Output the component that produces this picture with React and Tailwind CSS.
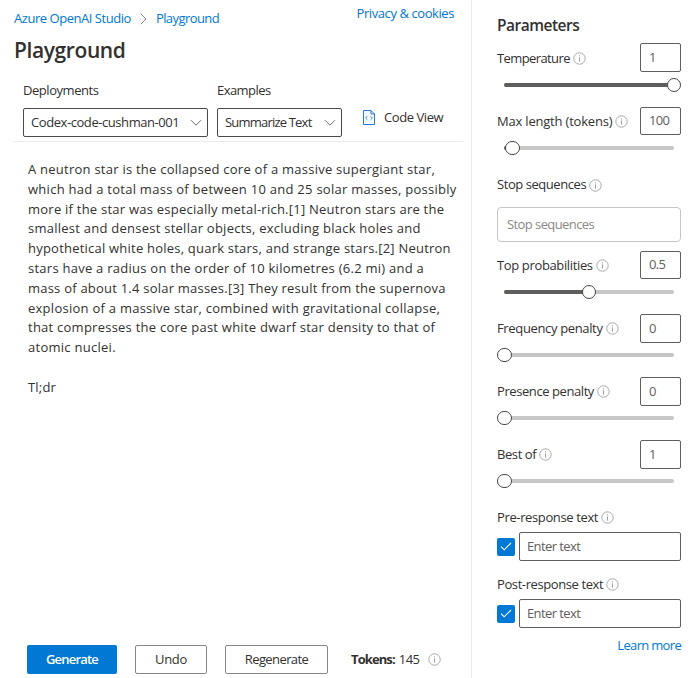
function Info({ className = "" }) {
  return (
    <svg className={"shrink-0 " + className} width="13" height="13" viewBox="0 0 13 13" fill="none" stroke="#a19f9d">
      <circle cx="6.5" cy="6.5" r="5.7" strokeWidth="0.9" />
      <path d="M6.5 5.4V9.6M6.5 3.3V4.4" strokeWidth="1" />
    </svg>
  );
}

function Chevron() {
  return (
    <svg className="shrink-0" width="12" height="8" viewBox="0 0 12 8" fill="none" stroke="#605e5c" strokeWidth="0.9">
      <path d="M1 1.2L6 6.2L11 1.2" />
    </svg>
  );
}

function Select({ label, labelClass, value, valueClass, width }) {
  return (
    <div className={"flex flex-col " + width}>
      <div className="h-[18px] leading-[18px]">
        <span className={"font-medium " + labelClass}>{label}</span>
      </div>
      <div className="mt-[9px] flex h-[29px] items-center justify-between rounded-[2px] border border-[#4b4948] pr-[5px] pl-[7px]">
        <span className={"pt-px whitespace-nowrap " + valueClass}>{value}</span>
        <Chevron />
      </div>
    </div>
  );
}

function Label({ text, className }) {
  return (
    <div className="flex items-center gap-[3px]">
      <span className={"font-medium whitespace-nowrap " + className}>{text}</span>
      <Info />
    </div>
  );
}

function Param({ label, labelClass, value, boxClass = "mt-px h-[29px]", fill, offset, thumbClass = "w-[15px]" }) {
  return (
    <div className="h-[63px] shrink-0">
      <div className="flex h-[29px] items-start justify-between">
        <div className="flex h-[31px] items-center">
          <Label text={label} className={labelClass} />
        </div>
        <div className={"flex w-[41px] items-center rounded-[2px] border border-[#605e5c] pl-[8px] text-[#605e5c] " + boxClass}>
          <span className="tracking-[-0.7px]">{value}</span>
        </div>
      </div>
      <div className="mt-[6px] ml-[7px] flex h-[14px] w-[170px] items-center">
        <div className="relative h-[4px] w-full rounded-full bg-[#c8c6c4]">
          <div className="h-full rounded-full bg-[#605e5c]" style={{ width: fill }} />
          <div
            className={"absolute top-[-5px] h-[14px] rounded-full border border-[#484644] bg-white " + thumbClass}
            style={{ left: offset }}
          />
        </div>
      </div>
    </div>
  );
}

function ResponseText({ label, labelClass }) {
  return (
    <div className="h-[67px] shrink-0">
      <div className="flex h-[19px] items-center">
        <Label text={label} className={labelClass} />
      </div>
      <div className="mt-[5px] flex items-center gap-[4px]">
        <div className="flex h-[18px] w-[18px] items-center justify-center rounded-[2px] bg-[#0078d4]">
          <svg width="12" height="9" viewBox="0 0 12 9" fill="none" stroke="white" strokeWidth="1.1">
            <path d="M1 4.6L4.2 7.8L11 1" />
          </svg>
        </div>
        <div className="flex h-[29px] flex-1 items-center rounded-[2px] border border-[#605e5c] pl-[7px] text-[#605e5c]">
          <span className="tracking-[-0.6px]">Enter text</span>
        </div>
      </div>
    </div>
  );
}

const lines = [
  ["A neutron star is the collapsed core of a massive supergiant star,", "tracking-[0.246px]"],
  ["which had a total mass of between 10 and 25 solar masses, possibly", "tracking-[0.27px]"],
  ["more if the star was especially metal-rich.[1] Neutron stars are the", "tracking-[0.237px]"],
  ["smallest and densest stellar objects, excluding black holes and", "tracking-[0.25px]"],
  ["hypothetical white holes, quark stars, and strange stars.[2] Neutron", "tracking-[0.22px]"],
  ["stars have a radius on the order of 10 kilometres (6.2 mi) and a", "tracking-[0.255px]"],
  ["mass of about 1.4 solar masses.[3] They result from the supernova", "tracking-[0.223px]"],
  ["explosion of a massive star, combined with gravitational collapse,", "tracking-[0.26px]"],
  ["that compresses the core past white dwarf star density to that of", "tracking-[0.246px]"],
  ["atomic nuclei.", "tracking-[0.27px]"],
  ["\u00a0", ""],
  ["Tl;dr", "tracking-[0.2px]"],
];

export default function App() {
  return (
    <div className="flex h-[678px] w-[697px] overflow-hidden bg-white font-['Open_Sans','Noto_Sans',sans-serif] text-[13px] text-[#323130]">
      <main className="flex w-[471px] shrink-0 flex-col">
        <div className="flex h-[36px] items-start justify-between pr-[17px] pl-[14px] text-[#0078d4]">
          <div className="mt-[10px] flex h-[18px] items-center">
            <span className="tracking-[-0.46px]">Azure OpenAI Studio</span>
            <svg className="mx-[9px]" width="7" height="12" viewBox="0 0 7 12" fill="none" stroke="#8a8886">
              <path d="M0.8 0.8L6 6L0.8 11.2" />
            </svg>
            <span className="tracking-[-0.58px]">Playground</span>
          </div>
          <span className="mt-[4px] h-[18px] leading-[18px] tracking-[-0.42px]">Privacy &amp; cookies</span>
        </div>
        <h1 className="h-[28px] pl-[14px] text-[21px] leading-[28px] font-semibold">
          <span className="tracking-[-0.4px]">Playground</span>
        </h1>
        <div className="mt-[17px] mr-[8px] ml-[14px] flex h-[61px] border-b border-[#edebe9] pl-[9px]">
          <Select label="Deployments" labelClass="tracking-[-0.45px]" value="Codex-code-cushman-001" valueClass="tracking-[-0.43px]" width="w-[185px]" />
          <div className="w-[9px]" />
          <Select label="Examples" labelClass="tracking-[-0.55px]" value="Summarize Text" valueClass="tracking-[-0.8px]" width="w-[125px]" />
          <div className="mt-[27px] ml-[21px] flex h-[19px] items-center">
            <svg width="12" height="15" viewBox="0 0 12 15" fill="none" stroke="#2b7cd3">
              <path d="M0.5 0.5H8L11.5 4V14.5H0.5Z" fill="#f3f8fd" />
              <path d="M8 0.5V4H11.5" />
              <path d="M4.3 6.3L2.6 8L4.3 9.7M7.7 6.3L9.4 8L7.7 9.7" strokeWidth="0.9" />
            </svg>
            <span className="ml-[9px] tracking-[-0.42px]">Code View</span>
          </div>
        </div>
        <div className="mt-[18px] flex-1 pl-[28px]">
          {lines.map(([t, c], i) => (
            <div key={i} className="h-[19.8px] leading-[19.8px] whitespace-nowrap">
              <span className={c}>{t}</span>
            </div>
          ))}
        </div>
        <div className="mb-[4px] flex h-[29px] items-center pl-[27px]">
          <button className="h-[29px] w-[90px] rounded-[2px] bg-[#0078d4] font-semibold text-white">
            <span className="tracking-[-0.8px]">Generate</span>
          </button>
          <button className="ml-[18px] h-[29px] w-[72px] rounded-[2px] border border-[#8a8886] font-medium">
            <span className="tracking-[-0.3px]">Undo</span>
          </button>
          <button className="ml-[18px] h-[29px] w-[103px] rounded-[2px] border border-[#8a8886] font-medium">
            <span className="tracking-[-0.6px]">Regenerate</span>
          </button>
          <span className="ml-[23px] font-bold tracking-[-0.9px]">Tokens:</span>
          <span className="ml-[4px] tracking-[-0.5px]">145</span>
          <Info className="ml-[8px]" />
        </div>
      </main>
      <aside className="flex flex-1 flex-col border-l border-[#edebe9] pr-[16px] pl-[25px]">
        <h2 className="mt-[14px] h-[22px] shrink-0 text-[15.5px] leading-[22px] font-semibold">
          <span className="tracking-[-0.5px]">Parameters</span>
        </h2>
        <div className="h-[7px] shrink-0" />
        <Param label="Temperature" labelClass="tracking-[-0.6px]" value="1" boxClass="h-[29px]" fill="100%" offset="163px" thumbClass="w-[14px]" />
        <Param label="Max length (tokens)" labelClass="tracking-[-0.2px]" value="100" boxClass="mt-px h-[28px]" fill="5%" offset="1px" />
        <div className="h-[81px] shrink-0 pt-[7px]">
          <div className="flex h-[18px] items-center">
            <Label text="Stop sequences" className="tracking-[-0.44px]" />
          </div>
          <div className="mt-[13px] flex h-[35px] items-center rounded-[4px] border border-[#c8c6c4] pl-[9px] text-[#8a8886]">
            <span className="tracking-[-0.58px]">Stop sequences</span>
          </div>
        </div>
        <Param label="Top probabilities" labelClass="tracking-[-0.36px]" value="0.5" boxClass="mt-px h-[28px]" fill="50%" offset="78px" thumbClass="w-[14px]" />
        <Param label="Frequency penalty" labelClass="tracking-[-0.35px]" value="0" fill="0%" offset="-7px" />
        <Param label="Presence penalty" labelClass="tracking-[-0.42px]" value="0" fill="0%" offset="-7px" />
        <Param label="Best of" labelClass="tracking-[-0.42px]" value="1" fill="0%" offset="-7px" />
        <div className="h-[6px] shrink-0" />
        <ResponseText label="Pre-response text" labelClass="tracking-[-0.37px]" />
        <ResponseText label="Post-response text" labelClass="tracking-[-0.4px]" />
        <div className="-mt-[6px] h-[18px] text-right leading-[18px] text-[#0078d4]">
          <span className="tracking-[-0.68px]">Learn more</span>
        </div>
      </aside>
    </div>
  );
}
